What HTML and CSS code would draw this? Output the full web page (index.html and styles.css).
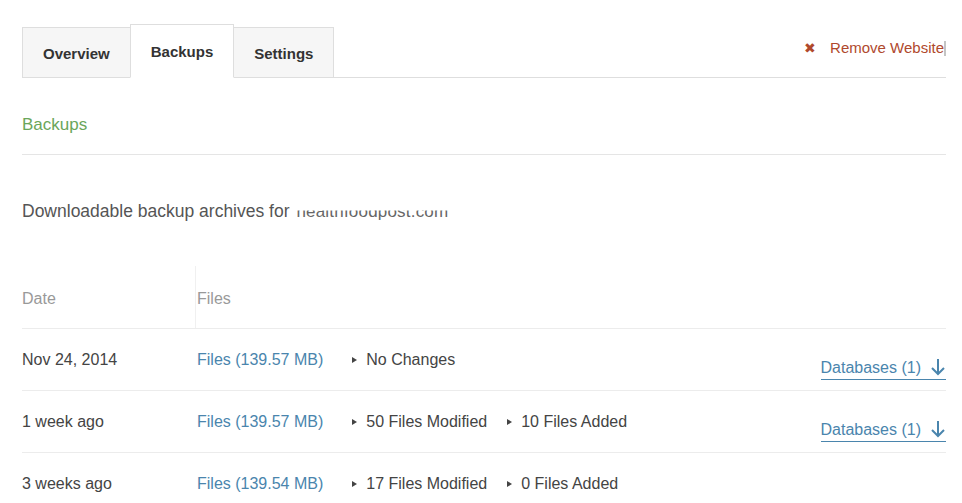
FILE: index.html
```html
<!DOCTYPE html>
<html>
<head>
<meta charset="utf-8">
<link rel="stylesheet" href="styles.css">
</head>
<body>
<div class="page">
  <div class="tabs">
    <div class="tab">Overview</div>
    <div class="tab active">Backups</div>
    <div class="tab">Settings</div>
    <a class="remove"><span class="x">&#10006;</span>Remove Website<span class="caret"></span></a>
  </div>

  <h2 class="section-title">Backups</h2>

  <p class="desc">Downloadable backup archives for <span class="domain">healthfoodpost.com</span></p>

  <div class="table">
    <div class="row head">
      <div class="c-date">Date</div>
      <div class="c-files">Files</div>
      <div></div>
    </div>
    <div class="row">
      <div class="c-date">Nov 24, 2014</div>
      <div class="c-files"><a class="link">Files (139.57 MB)</a><span class="chg">No Changes</span></div>
      <div class="c-db"><a class="db">Databases (1)<svg class="dl" viewBox="0 0 16 18" width="16" height="18"><path d="M8 1 V16 M2 10 L8 16 L14 10" fill="none" stroke="currentColor" stroke-width="2"/></svg></a></div>
    </div>
    <div class="row">
      <div class="c-date">1 week ago</div>
      <div class="c-files"><a class="link">Files (139.57 MB)</a><span class="chg">50 Files Modified</span><span class="chg">10 Files Added</span></div>
      <div class="c-db"><a class="db">Databases (1)<svg class="dl" viewBox="0 0 16 18" width="16" height="18"><path d="M8 1 V16 M2 10 L8 16 L14 10" fill="none" stroke="currentColor" stroke-width="2"/></svg></a></div>
    </div>
    <div class="row">
      <div class="c-date">3 weeks ago</div>
      <div class="c-files"><a class="link">Files (139.54 MB)</a><span class="chg">17 Files Modified</span><span class="chg">0 Files Added</span></div>
      <div></div>
    </div>
  </div>
</div>
</body>
</html>
```

FILE: styles.css
```css
html, body {
  margin: 0;
  padding: 0;
  background: #fff;
}
body {
  font-family: "Liberation Sans", Arial, sans-serif;
  color: #444;
  font-size: 16px;
}
.page {
  padding: 0 16px 0 22px;
}
.tabs {
  margin-top: 25px;
  display: flex;
  align-items: flex-end;
  border-bottom: 1px solid #dedede;
  height: 52px;
}
.tab {
  box-sizing: border-box;
  height: 51px;
  margin-bottom: -1px;
  padding: 0 20px;
  border: 1px solid #dedede;
  background: #f6f6f6;
  font-weight: bold;
  font-size: 15px;
  color: #333;
  line-height: 52px;
}
.tab + .tab { margin-left: -1px; }
.tab.active {
  height: 54px;
  background: #fff;
  border-bottom-color: #fff;
  line-height: 54px;
  padding: 0 20px;
  position: relative;
}
.remove {
  margin-left: auto;
  align-self: flex-start;
  margin-top: 13px;
  display: flex;
  align-items: center;
  color: #b0492d;
  font-size: 15px;
  line-height: 20px;
}
.remove .x {
  font-size: 14px;
  margin-right: 14px;
}
.caret {
  display: inline-block;
  width: 2px;
  height: 15px;
  background: #c4c4c4;
}
.section-title {
  margin: 35px 0 0;
  padding-bottom: 17px;
  border-bottom: 1px solid #e5e5e5;
  font-weight: normal;
  font-size: 17px;
  line-height: 24px;
  color: #6aa65a;
}
.desc {
  margin: 45px 0 0;
  font-size: 17.5px;
  line-height: 22px;
  color: #555;
}
.domain {
  color: #666;
  clip-path: inset(45% 0 0 0);
  margin-left: 2px;
  font-size: 17px;
  letter-spacing: 0.2px;
}
.table {
  margin-top: 43px;
}
.row {
  display: grid;
  grid-template-columns: 174px 1fr auto;
  border-bottom: 1px solid #ececec;
  height: 61px;
}
.row > div {
  line-height: 22px;
  padding-top: 20px;
}
.row.head {
  height: 62px;
  color: #999;
}
.row.head > div { padding-top: 22px; }
.row.head .c-date {
  border-right: 1px solid #f0f0f0;
}
.c-files {
  padding-left: 1px;
  display: flex;
  align-items: flex-start;
}
.link {
  color: #4a85ad;
  margin-right: 29px;
}
.chg {
  position: relative;
  padding-left: 14px;
  margin-right: 20px;
  color: #444;
}
.chg::before {
  content: "";
  position: absolute;
  left: 0;
  top: 8px;
  border-left: 5px solid #444;
  border-top: 3px solid transparent;
  border-bottom: 3px solid transparent;
}
.row > .c-db {
  padding-top: 28px;
}
.db {
  display: flex;
  align-items: center;
  color: #4a85ad;
  border-bottom: 1px solid #4a85ad;
  margin-left: -2px;
  height: 23px;
  box-sizing: border-box;
  padding-bottom: 1px;
}
.dl {
  margin-left: 9px;
  margin-top: -2px;
}
```
